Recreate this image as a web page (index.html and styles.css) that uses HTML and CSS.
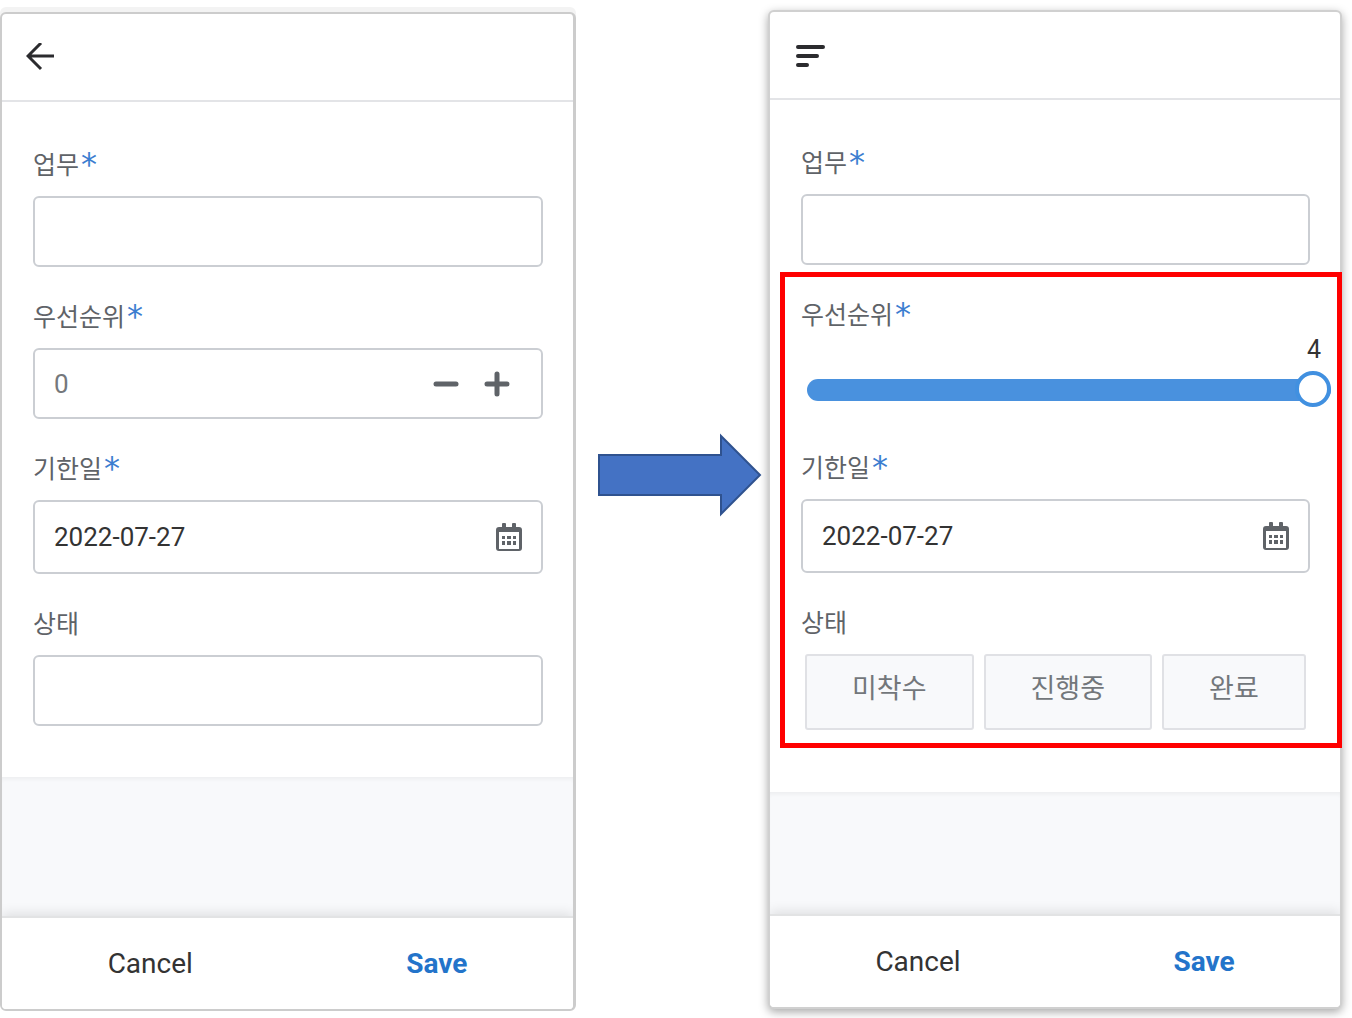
FILE: index.html
```html
<!DOCTYPE html>
<html lang="ko">
<head>
<meta charset="utf-8">
<title>업무</title>
<link rel="stylesheet" href="styles.css">
</head>
<body>
<main class="page">
  <form class="phone phone-before">
    <header class="bar">
      <button type="button" class="icon-btn" aria-label="Back">
        <svg width="28" height="28" viewBox="0 0 28 28" fill="none" stroke="#2b2b2e" stroke-width="3"><path d="M28 13H3M15 0L2 13l13 13"/></svg>
      </button>
    </header>
    <div class="fields">
      <div class="field">
        <label class="label" for="task-a">업무<span class="req">*</span></label>
        <div class="box"><input class="input" id="task-a" type="text"></div>
      </div>
      <div class="field">
        <label class="label" for="prio-a">우선순위<span class="req">*</span></label>
        <div class="box box-steps">
          <input class="input muted" id="prio-a" type="text" value="0">
          <button type="button" class="icon-btn" aria-label="Decrease"><svg width="26" height="26" viewBox="0 0 26 26" stroke="#5f6368" stroke-width="5" stroke-linecap="round"><path d="M3 13h20"/></svg></button>
          <button type="button" class="icon-btn" aria-label="Increase"><svg width="26" height="26" viewBox="0 0 26 26" stroke="#5f6368" stroke-width="5" stroke-linecap="round"><path d="M3 13h20M13 3v20"/></svg></button>
        </div>
      </div>
      <div class="field">
        <label class="label" for="due-a">기한일<span class="req">*</span></label>
        <div class="box box-date">
          <input class="input" id="due-a" type="text" value="2022-07-27">
          <button type="button" class="icon-btn" aria-label="Calendar"><svg width="26" height="30" viewBox="0 0 26 30"><path fill="#5f6368" fill-rule="evenodd" d="M6 5V2q0-1 1-1h2q1 0 1 1v3h6V2q0-1 1-1h2q1 0 1 1v3h3q3 0 3 3v18q0 3-3 3H3q-3 0-3-3V8q0-3 3-3h3zM3 10v17h20V10z"/><path fill="#5f6368" d="M6 14h3v3H6zM11 14h4v3h-4zM17 14h3v3h-3zM6 19h3v4H6zM11 19h4v4h-4zM17 19h3v4h-3z"/></svg></button>
        </div>
      </div>
      <div class="field">
        <label class="label" for="state-a">상태</label>
        <div class="box"><input class="input" id="state-a" type="text"></div>
      </div>
    </div>
    <div class="filler"></div>
    <footer class="actions">
      <button type="button" class="action">Cancel</button>
      <button type="button" class="action primary">Save</button>
    </footer>
  </form>

  <div class="between">
    <svg class="arrow" width="164" height="84" viewBox="0 0 164 84"><path d="M1 22H123V3L162 42L123 81V62H1z" fill="#4472c4" stroke="#2f528f" stroke-width="2"/></svg>
  </div>

  <form class="phone phone-after">
    <header class="bar">
      <button type="button" class="icon-btn" aria-label="Menu">
        <svg width="32" height="28" viewBox="0 0 32 28" stroke="#2b2b2e" stroke-width="4" stroke-linecap="round"><path d="M4 6h25M4 15h19M4 24h9"/></svg>
      </button>
    </header>
    <div class="fields">
      <div class="field">
        <label class="label" for="task-b">업무<span class="req">*</span></label>
        <div class="box"><input class="input" id="task-b" type="text"></div>
      </div>
      <div class="marked">
        <div class="field">
          <label class="label label-tight" for="prio-b">우선순위<span class="req">*</span></label>
          <div class="slider">
            <output class="slider-value" for="prio-b">4</output>
            <input class="range" id="prio-b" type="range" min="0" max="4" value="4">
          </div>
        </div>
        <div class="field">
          <label class="label" for="due-b">기한일<span class="req">*</span></label>
          <div class="box box-date">
            <input class="input" id="due-b" type="text" value="2022-07-27">
            <button type="button" class="icon-btn" aria-label="Calendar"><svg width="26" height="30" viewBox="0 0 26 30"><path fill="#5f6368" fill-rule="evenodd" d="M6 5V2q0-1 1-1h2q1 0 1 1v3h6V2q0-1 1-1h2q1 0 1 1v3h3q3 0 3 3v18q0 3-3 3H3q-3 0-3-3V8q0-3 3-3h3zM3 10v17h20V10z"/><path fill="#5f6368" d="M6 14h3v3H6zM11 14h4v3h-4zM17 14h3v3h-3zM6 19h3v4H6zM11 19h4v4h-4zM17 19h3v4h-3z"/></svg></button>
          </div>
        </div>
        <div class="field" role="group" aria-labelledby="state-b">
          <span class="label" id="state-b">상태</span>
          <div class="choices">
            <button type="button" class="choice">미착수</button>
            <button type="button" class="choice">진행중</button>
            <button type="button" class="choice">완료</button>
          </div>
        </div>
      </div>
    </div>
    <div class="filler"></div>
    <footer class="actions">
      <button type="button" class="action">Cancel</button>
      <button type="button" class="action primary">Save</button>
    </footer>
  </form>
</main>
</body>
</html>
```
FILE: styles.css
```css
* { box-sizing: border-box; }

body {
  margin: 0;
  background: #fff;
  font-family: Roboto, "Noto Sans CJK KR", sans-serif;
  font-size: 26px;
  color: #333;
}

button, input {
  font: inherit;
  color: inherit;
  background: none;
  border: 0;
  padding: 0;
  margin: 0;
}

button { cursor: pointer; }

.page {
  display: grid;
  grid-template-columns: 288fr 96fr 287fr;
  min-height: 100vh;
  padding: 10px 10px 7px 0;
}

.phone {
  display: flex;
  flex-direction: column;
  min-width: 0;
  background: #fff;
  border: 2px solid #ccc;
  border-radius: 6px;
}

.phone-before {
  margin-top: 2px;
  border-right-width: 3px;
  box-shadow: 0 -5px 0 #f3f3f3;
}

.phone-after {
  margin-bottom: 2px;
  border-color: #d0d0d0;
  box-shadow: 0 3px 10px rgba(0, 0, 0, 0.35);
}

.bar {
  display: flex;
  align-items: center;
  height: 88px;
  padding-left: 24px;
  border-bottom: 2px solid #e3e4e7;
}

.icon-btn { display: flex; flex: none; }

.fields {
  display: flex;
  flex-direction: column;
  gap: 33px;
  padding: 46px 30px 51px 31px;
  background: #fff;
}

.phone-after .fields { padding-bottom: 62px; }

.label {
  display: flex;
  height: 36px;
  margin-bottom: 12px;
  font-size: 25px;
  line-height: 36px;
  color: #5f6368;
}

.label-tight { margin-bottom: 0; }

.req {
  margin-left: 2px;
  font-family: "DejaVu Sans", sans-serif;
  font-size: 32px;
  line-height: 32px;
  color: #3b7dd0;
}

.box {
  display: flex;
  align-items: center;
  height: 71px;
  padding: 0 19px;
  border: 2px solid #cbced3;
  border-radius: 6px;
}

.box-steps { gap: 25px; padding-right: 31px; }
.box-date { height: 74px; }

.input {
  flex: 1;
  width: 100%;
  min-width: 0;
  height: 40px;
  outline: 0;
}

.muted { color: #75787c; }

/* Red frame drawn over the changed fields */
.marked {
  position: relative;
  display: flex;
  flex-direction: column;
  gap: 33px;
}

.marked::after {
  content: "";
  position: absolute;
  inset: -26px -32px -18px -21px;
  border: 5px solid #f00;
  pointer-events: none;
}

.slider {
  display: flex;
  flex-direction: column;
  margin: 0 -21px 0 6px;
  padding-bottom: 4px;
}

.slider-value {
  padding-right: 10px;
  font-size: 25px;
  line-height: 32px;
  text-align: right;
}

.range {
  appearance: none;
  width: 100%;
  height: 48px;
}

.range::-webkit-slider-runnable-track {
  height: 22px;
  border-radius: 11px;
  background: #4991de;
}

.range::-webkit-slider-thumb {
  appearance: none;
  width: 36px;
  height: 36px;
  margin-top: -8px;
  border: 4px solid #4190e0;
  border-radius: 50%;
  background: #fff;
}

.choices {
  display: flex;
  gap: 10px;
  padding-left: 4px;
}

.choice {
  height: 76px;
  padding: 0 45px 12px;
  border: 2px solid #e0e1e5;
  border-radius: 3px;
  background: #f8f9fb;
  font-size: 27px;
  color: #73777b;
  white-space: nowrap;
}

.filler {
  flex: 1;
  min-height: 60px;
  background: #f8f9fb;
  box-shadow: inset 0 4px 4px -2px rgba(0, 0, 0, 0.05);
}

.actions {
  display: grid;
  grid-template-columns: 1fr 1fr;
  gap: 14px;
  height: 93px;
  padding-left: 12px;
  border-top: 2px solid #e2e3e4;
  border-radius: 0 0 4px 4px;
  background: #fff;
  box-shadow: 0 -3px 12px rgba(0, 0, 0, 0.1);
  clip-path: inset(-16px 0 0);
}

.action { font-size: 28px; }

.primary {
  font-weight: 700;
  color: #2374ca;
}

.between { padding-top: 423px; }

.arrow {
  position: relative;
  display: block;
  margin: 0 6px 0 auto;
  z-index: 1;
}
```
